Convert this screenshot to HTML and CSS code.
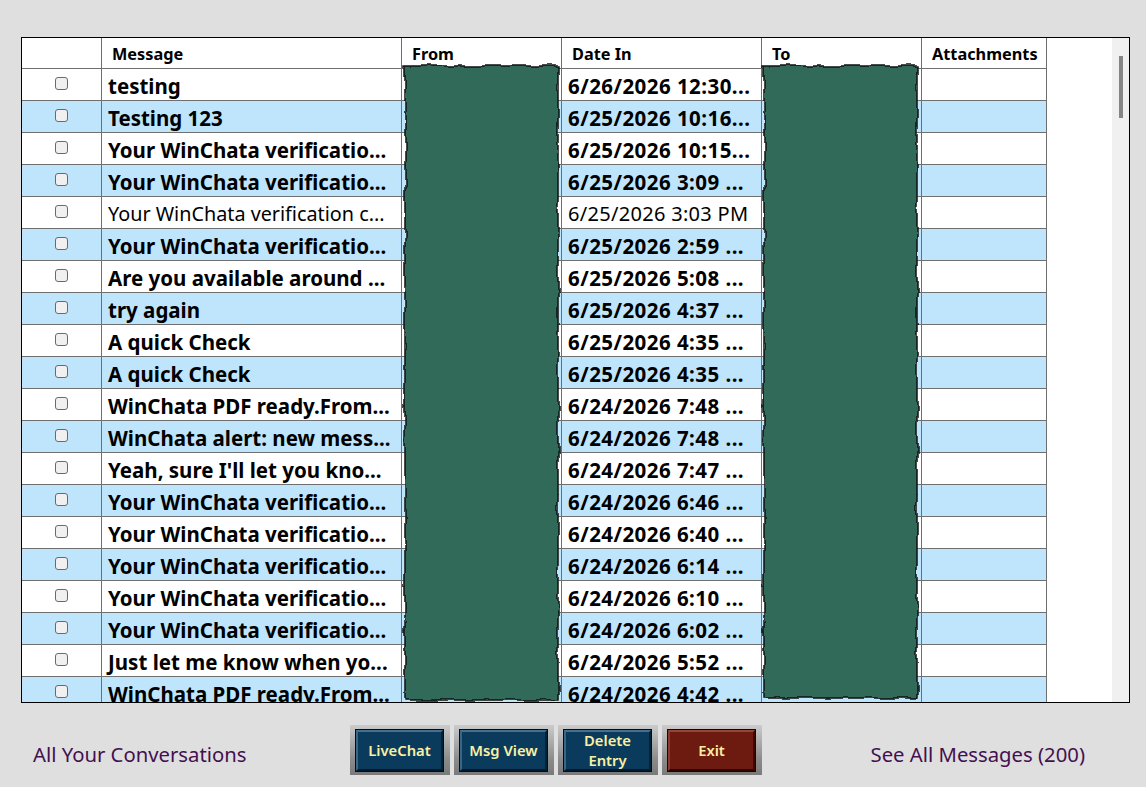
FILE: index.html
```html
<!DOCTYPE html>
<html>
<head>
<meta charset="utf-8">
<title>Messages</title>
<link rel="stylesheet" href="styles.css">
</head>
<body>
<div class="page">
  <div class="gridbox">
    <div class="table-area">
      <div class="row head">
        <div class="cell"></div>
        <div class="cell">Message</div>
        <div class="cell">From</div>
        <div class="cell">Date In</div>
        <div class="cell">To</div>
        <div class="cell">Attachments</div>
      </div>
      <div class="row"><div class="cell chk"><span class="box"></span></div><div class="cell">testing</div><div class="cell"></div><div class="cell date">6/26/2026 12:30...</div><div class="cell"></div><div class="cell"></div></div>
      <div class="row alt"><div class="cell chk"><span class="box"></span></div><div class="cell">Testing 123</div><div class="cell"></div><div class="cell date">6/25/2026 10:16...</div><div class="cell"></div><div class="cell"></div></div>
      <div class="row"><div class="cell chk"><span class="box"></span></div><div class="cell">Your WinChata verificatio...</div><div class="cell"></div><div class="cell date">6/25/2026 10:15...</div><div class="cell"></div><div class="cell"></div></div>
      <div class="row alt"><div class="cell chk"><span class="box"></span></div><div class="cell">Your WinChata verificatio...</div><div class="cell"></div><div class="cell date">6/25/2026 3:09 ...</div><div class="cell"></div><div class="cell"></div></div>
      <div class="row read"><div class="cell chk"><span class="box"></span></div><div class="cell">Your WinChata verification c...</div><div class="cell"></div><div class="cell date">6/25/2026 3:03 PM</div><div class="cell"></div><div class="cell"></div></div>
      <div class="row alt"><div class="cell chk"><span class="box"></span></div><div class="cell">Your WinChata verificatio...</div><div class="cell"></div><div class="cell date">6/25/2026 2:59 ...</div><div class="cell"></div><div class="cell"></div></div>
      <div class="row"><div class="cell chk"><span class="box"></span></div><div class="cell">Are you available around ...</div><div class="cell"></div><div class="cell date">6/25/2026 5:08 ...</div><div class="cell"></div><div class="cell"></div></div>
      <div class="row alt"><div class="cell chk"><span class="box"></span></div><div class="cell">try again</div><div class="cell"></div><div class="cell date">6/25/2026 4:37 ...</div><div class="cell"></div><div class="cell"></div></div>
      <div class="row"><div class="cell chk"><span class="box"></span></div><div class="cell">A quick Check</div><div class="cell"></div><div class="cell date">6/25/2026 4:35 ...</div><div class="cell"></div><div class="cell"></div></div>
      <div class="row alt"><div class="cell chk"><span class="box"></span></div><div class="cell">A quick Check</div><div class="cell"></div><div class="cell date">6/25/2026 4:35 ...</div><div class="cell"></div><div class="cell"></div></div>
      <div class="row"><div class="cell chk"><span class="box"></span></div><div class="cell">WinChata PDF ready.From...</div><div class="cell"></div><div class="cell date">6/24/2026 7:48 ...</div><div class="cell"></div><div class="cell"></div></div>
      <div class="row alt"><div class="cell chk"><span class="box"></span></div><div class="cell">WinChata alert: new mess...</div><div class="cell"></div><div class="cell date">6/24/2026 7:48 ...</div><div class="cell"></div><div class="cell"></div></div>
      <div class="row"><div class="cell chk"><span class="box"></span></div><div class="cell">Yeah, sure I'll let you kno...</div><div class="cell"></div><div class="cell date">6/24/2026 7:47 ...</div><div class="cell"></div><div class="cell"></div></div>
      <div class="row alt"><div class="cell chk"><span class="box"></span></div><div class="cell">Your WinChata verificatio...</div><div class="cell"></div><div class="cell date">6/24/2026 6:46 ...</div><div class="cell"></div><div class="cell"></div></div>
      <div class="row"><div class="cell chk"><span class="box"></span></div><div class="cell">Your WinChata verificatio...</div><div class="cell"></div><div class="cell date">6/24/2026 6:40 ...</div><div class="cell"></div><div class="cell"></div></div>
      <div class="row alt"><div class="cell chk"><span class="box"></span></div><div class="cell">Your WinChata verificatio...</div><div class="cell"></div><div class="cell date">6/24/2026 6:14 ...</div><div class="cell"></div><div class="cell"></div></div>
      <div class="row"><div class="cell chk"><span class="box"></span></div><div class="cell">Your WinChata verificatio...</div><div class="cell"></div><div class="cell date">6/24/2026 6:10 ...</div><div class="cell"></div><div class="cell"></div></div>
      <div class="row alt"><div class="cell chk"><span class="box"></span></div><div class="cell">Your WinChata verificatio...</div><div class="cell"></div><div class="cell date">6/24/2026 6:02 ...</div><div class="cell"></div><div class="cell"></div></div>
      <div class="row"><div class="cell chk"><span class="box"></span></div><div class="cell">Just let me know when yo...</div><div class="cell"></div><div class="cell date">6/24/2026 5:52 ...</div><div class="cell"></div><div class="cell"></div></div>
      <div class="row alt"><div class="cell chk"><span class="box"></span></div><div class="cell">WinChata PDF ready.From...</div><div class="cell"></div><div class="cell date">6/24/2026 4:42 ...</div><div class="cell"></div><div class="cell"></div></div>
    </div>
    <div class="scrollbar"><div class="thumb"></div></div>

    <svg class="redact redact-from" width="166" height="648" viewBox="0 0 166 648">
      <defs>
        <filter id="rough" x="-5%" y="-2%" width="110%" height="104%">
          <feTurbulence type="fractalNoise" baseFrequency="0.05" numOctaves="2" seed="4" result="noise"/>
          <feDisplacementMap in="SourceGraphic" in2="noise" scale="7" xChannelSelector="R" yChannelSelector="G"/>
        </filter>
      </defs>
      <rect x="6" y="6" width="153" height="634" filter="url(#rough)"/>
    </svg>
    <svg class="redact redact-to" width="166" height="648" viewBox="0 0 166 648">
      <rect x="6" y="6" width="153" height="632" filter="url(#rough)"/>
    </svg>
  </div>

  <div class="footer">
    <div class="label label-left">All Your Conversations</div>
    <div class="buttons">
      <div class="frame"><div class="btn blue">LiveChat</div></div>
      <div class="frame"><div class="btn blue">Msg View</div></div>
      <div class="frame"><div class="btn blue">Delete<br>Entry</div></div>
      <div class="frame"><div class="btn red">Exit</div></div>
    </div>
    <div class="label label-right">See All Messages (200)</div>
  </div>
</div>
</body>
</html>
```

FILE: styles.css
```css
* { box-sizing: border-box; }

html, body {
  margin: 0;
  padding: 0;
  background: #dfdfdf;
  font-family: "Noto Sans", "Open Sans", sans-serif;
}

.page {
  width: 1146px;
  height: 787px;
  padding: 37px 0 0 21px;
  overflow: hidden;
}

.gridbox {
  position: relative;
  width: 1109px;
  height: 666px;
  border: 1px solid #000;
  display: flex;
  background: #fff;
  overflow: hidden;
}

.table-area {
  width: 1090px;
  height: 100%;
  overflow: hidden;
  background: #fff;
}

.row {
  display: grid;
  grid-template-columns: 80px 300px 160px 200px 160px 125px;
  width: 1025px;
  height: 32px;
  background: #fff;
}

.row.alt { background: #bfe5fc; }

.cell {
  border-right: 1px solid #6f6f6f;
  border-bottom: 1px solid #6f6f6f;
  padding: 2px 0 0 6px;
  white-space: nowrap;
  overflow: hidden;
  font-size: 20.5px;
  font-weight: 700;
  color: #000;
  line-height: 30px;
}

.cell.date { letter-spacing: 0.45px; }

.row.read .cell { font-weight: 400; font-size: 19.8px; }
.row.read .cell.date { letter-spacing: 0.3px; font-size: 20px; }

.row.head { height: 31px; }
.row.head .cell {
  font-size: 16.3px;
  font-weight: 700;
  line-height: 28px;
  padding: 2px 0 0 10px;
}

.cell.chk {
  display: flex;
  align-items: center;
  justify-content: center;
  padding: 0;
}

.box {
  display: block;
  width: 13px;
  height: 13px;
  border: 1px solid #6a6a6a;
  border-radius: 3px;
  background: #f0f0f0;
  margin-left: 0;
  margin-top: -2px;
}

.scrollbar {
  width: 17px;
  height: 100%;
  background: #f0f0f0;
  padding: 18px 0 0 7px;
}

.thumb {
  width: 4px;
  height: 62px;
  background: #858585;
}

.redact {
  position: absolute;
  top: 22px;
}
.redact rect {
  fill: #306b5a;
  stroke: #111;
  stroke-width: 1.5;
}
.redact-from { left: 377px; }
.redact-to { left: 736px; }

.footer {
  display: flex;
  align-items: center;
  height: 84px;
  margin-left: -21px;
  padding: 10px 61px 0 33px;
}

.label {
  font-size: 20.3px;
  color: #44104f;
  margin-top: 8px;
  white-space: nowrap;
}

.label-left { width: 317px; }
.label-right { margin-left: auto; }

.buttons {
  display: flex;
  gap: 4px;
}

.frame {
  width: 100px;
  height: 50px;
  padding: 4px 6px 3px 5px;
  background: linear-gradient(#cbcbcb, #8a8a8a 70%, #7a7a7a);
}

.btn {
  width: 89px;
  height: 43px;
  display: flex;
  align-items: center;
  justify-content: center;
  text-align: center;
  color: #fbf0a2;
  font-size: 14.8px;
  font-weight: 600;
  line-height: 20px;
  padding-bottom: 1px;
  border: 3px solid;
  outline: 1px solid #0b0b0b;
  outline-offset: -1px;
}

.btn.blue {
  background: #0b3b5c;
  border-color: #47708e #032337 #021a2b #3a6584;
}

.btn.red {
  background: #6d1a10;
  border-color: #97453b #3d0a05 #2e0703 #8a3a30;
}
```
